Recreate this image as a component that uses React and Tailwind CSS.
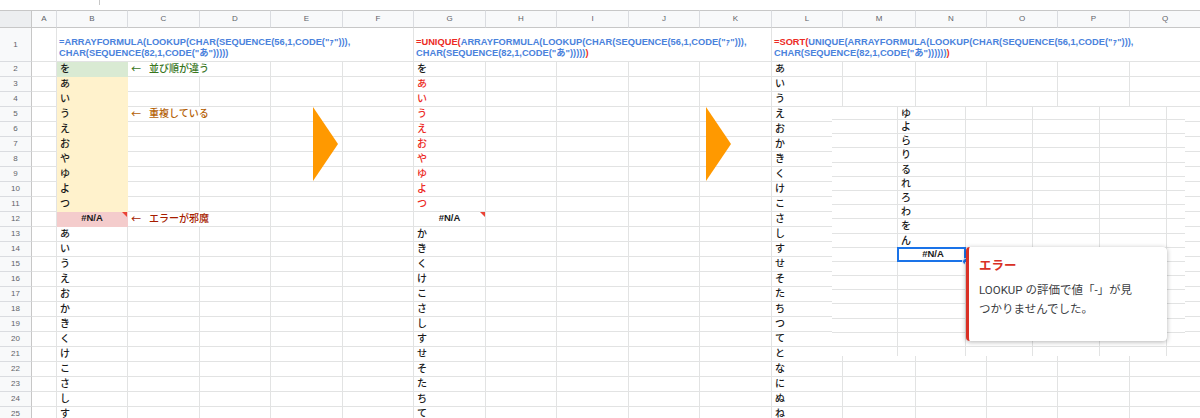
import { Fragment } from 'react';
import { twMerge } from 'tailwind-merge';

const LETTERS = ['A', 'B', 'C', 'D', 'E', 'F', 'G', 'H', 'I', 'J', 'K', 'L', 'M', 'N', 'O', 'P', 'Q'];

const colB = ['を', 'あ', 'い', 'う', 'え', 'お', 'や', 'ゆ', 'よ', 'つ', '#N/A', 'あ', 'い', 'う', 'え', 'お', 'か', 'き', 'く', 'け', 'こ', 'さ', 'し', 'す'];
const colG = ['を', 'あ', 'い', 'う', 'え', 'お', 'や', 'ゆ', 'よ', 'つ', '#N/A', 'か', 'き', 'く', 'け', 'こ', 'さ', 'し', 'す', 'せ', 'そ', 'た', 'ち', 'て'];
const colL = 'あいうえおかきくけこさしすせそたちつてとなにぬね'.split('');
const tail = ['ゆ', 'よ', 'ら', 'り', 'る', 'れ', 'ろ', 'わ', 'を', 'ん'];

const NOTES = {
  2: { text: '並び順が違う', color: 'text-[#38761d]' },
  5: { text: '重複している', color: 'text-[#b45f06]' },
  12: { text: 'エラーが邪魔', color: 'text-[#a61c00]' },
};

function Cell({ className, children }) {
  return (
    <div
      className={twMerge(
        'relative flex items-end whitespace-nowrap border-r border-b border-[#e2e3e3] px-[3px] pb-[1px] text-[10px] font-medium leading-[13px] text-[#1a1a1a]',
        className,
      )}
    >
      {children}
    </div>
  );
}

function ErrorMark() {
  return <span className="absolute right-0 top-0 h-0 w-0 border-l-[5px] border-t-[5px] border-l-transparent border-t-[#ea4335]" />;
}

function RowHead({ n, className }) {
  return (
    <div
      className={twMerge(
        'flex items-center justify-center border-r border-b border-r-[#c7c7c7] border-b-[#dadce0] bg-[#f8f9fa] text-[8px] text-[#5f6368]',
        className,
      )}
    >
      {n}
    </div>
  );
}

function Formula({ children }) {
  return (
    <Cell className="px-[2px] pb-[2px] text-[9.3px] font-bold leading-[11px] text-[#4a82dc]">
      <div>{children}</div>
    </Cell>
  );
}

const RED = 'text-[#ec2a24]';

export default function App() {
  return (
    <div className="relative h-[418px] w-[1200px] overflow-hidden bg-white font-['Liberation_Sans','Noto_Sans_CJK_JP',sans-serif]">
      {/* toolbar remnant */}
      <div className="flex h-[10px]">
        <div className="ml-[99px] h-[5px] w-px bg-[#c7c7c7]" />
      </div>

      <div className="grid w-[1210px] grid-cols-[32px_25px_71px_72px_71px_72px_71px_72px_71px_72px_71px_72px_71px_73px_71px_71px_72px_71px] grid-rows-[18px_34px_repeat(24,15px)]">
        {/* column headers */}
        <div className="border-t border-r border-b border-[#c7c7c7] bg-[#eceef0]" />
        {LETTERS.map((l) => (
          <div
            key={l}
            className="flex items-center justify-center border-t border-r border-b border-t-[#c7c7c7] border-r-[#dadce0] border-b-[#c7c7c7] bg-[#f8f9fa] text-[8px] text-[#5f6368]"
          >
            {l}
          </div>
        ))}

        {/* row 1: formulas */}
        <RowHead n={1} />
        <Cell />
        <div className="col-span-5 grid">
          <Formula>
            =ARRAYFORMULA(LOOKUP(CHAR(SEQUENCE(56,1,CODE("ｧ"))),
            <br />
            CHAR(SEQUENCE(82,1,CODE("あ")))))
          </Formula>
        </div>
        <div className="col-span-5 grid">
          <Formula>
            <span className={RED}>=UNIQUE(</span>ARRAYFORMULA(LOOKUP(CHAR(SEQUENCE(56,1,CODE("ｧ"))),
            <br />
            CHAR(SEQUENCE(82,1,CODE("あ")))))<span className={RED}>)</span>
          </Formula>
        </div>
        <div className="col-span-6 grid">
          <Formula>
            <span className={RED}>=SORT(</span>UNIQUE(ARRAYFORMULA(LOOKUP(CHAR(SEQUENCE(56,1,CODE("ｧ"))),
            <br />
            CHAR(SEQUENCE(82,1,CODE("あ"))))))<span className={RED}>)</span>
          </Formula>
        </div>

        {/* rows 2-25 */}
        {colB.map((b, i) => {
          const r = i + 2;
          const note = NOTES[r];
          const isErr = r === 12;
          const fill =
            r === 2
              ? 'bg-[#d9ead3] border-[#d9ead3]'
              : r <= 11
                ? 'bg-[#fff2cc] border-[#fff2cc]'
                : isErr
                  ? 'bg-[#f4cccc] border-[#f4cccc]'
                  : '';
          const gRed = r >= 3 && r <= 11 ? RED : '';
          return (
            <Fragment key={r}>
              <RowHead n={r} />
              <Cell />
              <Cell className={twMerge(fill, isErr && 'justify-center text-[9.5px] font-bold')}>
                {b}
                {isErr && <ErrorMark />}
              </Cell>
              {note ? (
                <Cell className={twMerge('col-span-2', note.color)}>
                  <span className="font-['Noto_Sans_CJK_JP',sans-serif]">←</span>
                  <span className="ml-[8px]">{note.text}</span>
                </Cell>
              ) : (
                <>
                  <Cell />
                  <Cell />
                </>
              )}
              <Cell />
              <Cell />
              <Cell className={twMerge(gRed, isErr && 'justify-center text-[9.5px] font-bold')}>
                {colG[i]}
                {isErr && <ErrorMark />}
              </Cell>
              <Cell />
              <Cell />
              <Cell />
              <Cell />
              <Cell>{colL[i]}</Cell>
              <Cell />
              <Cell />
              <Cell />
              <Cell />
              <Cell />
            </Fragment>
          );
        })}
      </div>

      {/* flow arrows */}
      <svg className="absolute left-[313px] top-[107px]" width="26" height="75" viewBox="0 0 26 75">
        <polygon points="0,0 25,37 0,74" fill="#ff9900" />
      </svg>
      <svg className="absolute left-[706px] top-[107px]" width="26" height="75" viewBox="0 0 26 75">
        <polygon points="0,0 25,37 0,74" fill="#ff9900" />
      </svg>

      {/* continuation of the sorted list with the error hover */}
      <div className="absolute left-[832px] top-[107px] h-[249px] w-[353px] overflow-hidden bg-white">
        <div className="grid grid-cols-[66px_68px_67px_67px_67px_18px] grid-rows-[13px_repeat(17,14.2px)]">
          {Array.from({ length: 18 }, (_, r) => (
            <Fragment key={r}>
              <div className="border-r border-b border-[#e2e3e3]" />
              <div className="relative flex items-center border-r border-b border-[#e2e3e3] pl-[3px] text-[10px] font-medium text-[#1a1a1a]">
                {tail[r]}
                {r === 10 && (
                  <>
                    <span className="w-full text-center text-[9.5px] font-bold">#N/A</span>
                    <span className="absolute -inset-[1px] border-2 border-[#1a73e8]" />
                    <span className="absolute -bottom-[4px] -right-[4px] h-[7px] w-[7px] rounded-full border border-white bg-[#1a73e8]" />
                  </>
                )}
              </div>
              <div className="border-r border-b border-[#e2e3e3]" />
              <div className="border-r border-b border-[#e2e3e3]" />
              <div className="border-r border-b border-[#e2e3e3]" />
              <div className="border-b border-[#e2e3e3]" />
            </Fragment>
          ))}
        </div>

        <div className="absolute left-[134px] top-[140px] h-[94px] w-[201px] rounded-[4px] border-l-[3px] border-[#d93025] bg-white pl-[10px] pt-[11px] font-['Roboto','Noto_Sans_CJK_JP',sans-serif] shadow-[0_1px_5px_rgba(0,0,0,0.3)]">
          <div className="text-[12.5px] font-bold leading-[16px] text-[#d93025]">エラー</div>
          <p className="mt-[7px] w-[162px] text-[11.5px] leading-[19px] text-[#3c4043]">
            LOOKUP の評価で値「-」が見つかりませんでした。
          </p>
        </div>
      </div>
    </div>
  );
}
